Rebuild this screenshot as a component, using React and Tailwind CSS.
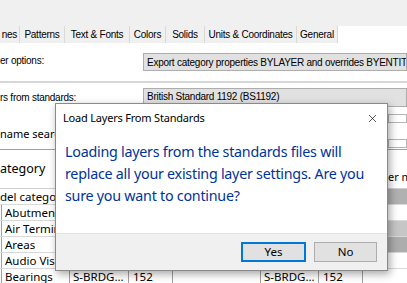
import { X } from "lucide-react";

const tabs = [
  { label: "nes", w: "w-[20px]", align: "justify-end pr-[2px]" },
  { label: "Patterns", w: "w-[45px]" },
  { label: "Text & Fonts", w: "w-[65px]" },
  { label: "Colors", w: "w-[36px]" },
  { label: "Solids", w: "w-[39px]" },
  { label: "Units & Coordinates", w: "w-[92px]" },
  { label: "General", w: "w-[41px]" },
];

const rows = [
  { name: "del catego", indent: false, right: "bg-[#b1b1b1]" },
  { name: "Abutments", indent: true, right: "bg-white" },
  { name: "Air Terminals", indent: true, right: "bg-[#c6c6c6]" },
  { name: "Areas", indent: true, right: "bg-[#adadad]" },
  { name: "Audio Visual", indent: true, right: "bg-white" },
];

const Row = ({ name, indent, right }) => (
  <div className="flex h-[16px] border-b border-[#d9d9d9]">
    <div
      className={`w-[69px] shrink-0 flex items-center whitespace-nowrap overflow-hidden ${
        indent ? "pl-[3px] border-l border-[#a0a0a0] ml-[1px]" : ""
      }`}
    >
      {name}
    </div>
    <div className="flex-1" />
    <div className={`w-[19px] shrink-0 ${right}`} />
  </div>
);

const Dialog = () => (
  <div
    className="absolute left-[55px] top-[103px] w-[333px] h-[168px] bg-white border border-[#8a8a8a] shadow-[2px_3px_8px_rgba(0,0,0,0.35)] flex flex-col"
    style={{ fontFamily: '"Noto Sans", sans-serif' }}
  >
    <div className="h-[29px] flex items-center justify-between pl-[7px] pr-[8px] text-[11px] tracking-[-0.2px] text-black">
      <span>Load Layers From Standards</span>
      <X className="w-[13px] h-[13px]" strokeWidth={1.2} />
    </div>
    <div className="flex-1 pl-[9px] pr-[6px] pt-[8px] text-[14.3px] tracking-[-0.25px] leading-[22px] text-[#003399]">
      Loading layers from the standards files will replace all your existing layer settings. Are you sure you want to continue?
    </div>
    <div className="h-[37px] bg-[#f0f0f0] border-t border-[#e3e3e3] flex items-center justify-end gap-[8px] pr-[10px] text-[11.5px] text-black">
      <button className="w-[65px] h-[20px] bg-[#e1e1e1] border-2 border-[#0078d7] flex items-center justify-center">
        Yes
      </button>
      <button className="w-[63px] h-[20px] bg-[#e1e1e1] border border-[#adadad] flex items-center justify-center">
        No
      </button>
    </div>
  </div>
);

export default function App() {
  return (
    <div
      className="relative w-[407px] h-[283px] overflow-hidden bg-white text-black"
      style={{ fontFamily: '"Liberation Sans", Arial, sans-serif' }}
    >
      <div className="h-[26px] bg-[#f0f0f0]" />
      <div className="flex h-[17px] text-[10px] tracking-[-0.25px] bg-white">
        {tabs.map((t) => (
          <div
            key={t.label}
            className={`${t.w} shrink-0 flex items-center ${t.align || "justify-center"} bg-[#f0f0f0] border-r border-[#d9d9d9] whitespace-nowrap overflow-hidden`}
          >
            {t.label}
          </div>
        ))}
      </div>

      <div className="flex items-center h-[38px] text-[10px] tracking-[-0.25px]">
        <div className="w-[143px] shrink-0 -mt-[4px]">er options:</div>
        <div className="flex-1 h-[18px] bg-[#e1e1e1] border border-[#adadad] flex items-center pl-[3px] whitespace-nowrap overflow-hidden">
          Export category properties BYLAYER and overrides BYENTITY
        </div>
      </div>
      <div className="h-[2px] bg-[#d7d7d7]" />

      <div className="flex h-[22px] pt-[5px] text-[10px] tracking-[-0.25px]">
        <div className="w-[143px] shrink-0 pt-[5px] leading-[10px]">rs from standards:</div>
        <div className="flex-1 h-[19px] bg-[#e1e1e1] border border-[#adadad] pl-[3px] whitespace-nowrap overflow-hidden leading-[16px]">
          British Standard 1192 (BS1192)
        </div>
      </div>

      <div
        className="flex h-[44px] text-[11px]"
        style={{ fontFamily: '"Noto Sans", sans-serif' }}
      >
        <div className="flex-1 pt-[22px] leading-[14px] whitespace-nowrap">name search</div>
        <div className="w-[19px] shrink-0 flex flex-col pt-[9px] gap-[16px]">
          <div className="h-[9px] border border-[#b5b5b5] bg-white" />
          <div className="h-[9px] border border-[#b5b5b5] bg-white" />
        </div>
      </div>

      <div
        className="flex h-[40px] border-t border-[#a0a0a0] border-b border-b-[#d0d0d0] text-[12.5px]"
        style={{ fontFamily: '"Noto Sans", sans-serif' }}
      >
        <div className="flex-1 flex items-center">ategory</div>
        <div className="w-[19px] shrink-0 flex items-center text-[11px] pt-[16px] whitespace-nowrap overflow-hidden">
          er m
        </div>
      </div>

      <div className="text-[11.5px]" style={{ fontFamily: '"Noto Sans", sans-serif' }}>
        {rows.map((r) => (
          <Row key={r.name} {...r} />
        ))}
        <div className="flex h-[16px] border-b border-[#d9d9d9] whitespace-nowrap">
          <div className="w-[68px] shrink-0 pl-[3px] flex items-center ml-[1px] border-l border-[#a0a0a0] overflow-hidden">
            Bearings
          </div>
          <div className="w-[59px] shrink-0 border-l border-[#a0a0a0] pl-[3px] flex items-center overflow-hidden">
            S-BRDG...
          </div>
          <div className="w-[44px] shrink-0 border-l border-[#a0a0a0] pl-[4px] flex items-center">
            152
          </div>
          <div className="w-[88px] shrink-0 border-l border-[#a0a0a0]" />
          <div className="w-[58px] shrink-0 border-l border-[#a0a0a0] pl-[3px] flex items-center overflow-hidden">
            S-BRDG...
          </div>
          <div className="w-[44px] shrink-0 border-l border-[#a0a0a0] pl-[4px] flex items-center">
            152
          </div>
          <div className="flex-1 border-l border-[#a0a0a0]" />
        </div>
      </div>

      <Dialog />
    </div>
  );
}
